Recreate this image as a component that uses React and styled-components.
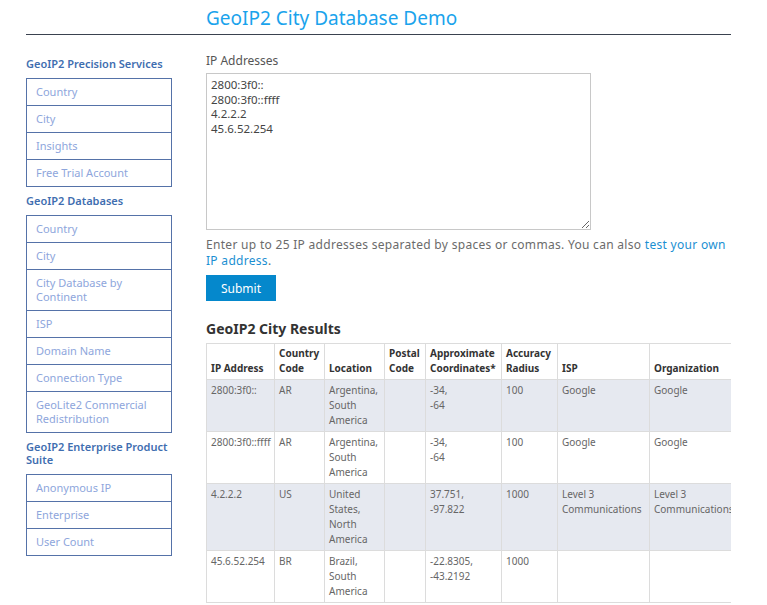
import React from 'react';
import styled, { createGlobalStyle } from 'styled-components';

const GlobalStyle = createGlobalStyle`
  html, body { margin: 0; padding: 0; background: #fff; }
  html { scrollbar-width: none; }
  body {
    font-family: "Noto Sans", "Open Sans", sans-serif;
    color: #555;
  }
`;

const sideGroups = [
  {
    title: 'GeoIP2 Precision Services',
    items: ['Country', 'City', 'Insights', 'Free Trial Account'],
  },
  {
    title: 'GeoIP2 Databases',
    items: [
      'Country',
      'City',
      'City Database by Continent',
      'ISP',
      'Domain Name',
      'Connection Type',
      'GeoLite2 Commercial Redistribution',
    ],
  },
  {
    title: 'GeoIP2 Enterprise Product Suite',
    items: ['Anonymous IP', 'Enterprise', 'User Count'],
  },
];

const columns = [
  { label: 'IP Address', width: 68 },
  { label: 'Country Code', width: 50 },
  { label: 'Location', width: 60 },
  { label: 'Postal Code', width: 41 },
  { label: 'Approximate Coordinates*', width: 76 },
  { label: 'Accuracy Radius', width: 56 },
  { label: 'ISP', width: 92 },
  { label: 'Organization', width: 96 },
  { label: 'Domain', width: 70 },
  { label: 'Metro Code', width: 50 },
];

const rows = [
  ['2800:3f0::', 'AR', 'Argentina, South America', '', '-34,\n-64', '100', 'Google', 'Google', '', ''],
  ['2800:3f0::ffff', 'AR', 'Argentina, South America', '', '-34,\n-64', '100', 'Google', 'Google', '', ''],
  ['4.2.2.2', 'US', 'United States, North America', '', '37.751,\n-97.822', '1000', 'Level 3 Communications', 'Level 3 Communications', '', ''],
  ['45.6.52.254', 'BR', 'Brazil, South America', '', '-22.8305,\n-43.2192', '1000', '', '', '', ''],
];

const App = () => {
  return (
    <Page>
      <GlobalStyle />
      <Header>
        <Title>GeoIP2 City Database Demo</Title>
      </Header>
      <Layout>
        <Sidebar>
          {sideGroups.map((g) => (
            <React.Fragment key={g.title}>
              <SideHeading>{g.title}</SideHeading>
              <SideList>
                {g.items.map((it) => (
                  <SideItem key={it} href="#">{it}</SideItem>
                ))}
              </SideList>
            </React.Fragment>
          ))}
        </Sidebar>
        <Main>
          <Label>IP Addresses</Label>
          <IpInput
            spellCheck
            defaultValue={'2800:3f0::\n2800:3f0::ffff\n4.2.2.2\n45.6.52.254'}
          />
          <Help>
            Enter up to 25 IP addresses separated by spaces or commas. You can also{' '}
            <a href="#">test your own IP address</a>.
          </Help>
          <SubmitButton>Submit</SubmitButton>
          <ResultsTitle>GeoIP2 City Results</ResultsTitle>
          <TableWrap>
            <Table>
              <colgroup>
                {columns.map((c) => (
                  <col key={c.label} style={{ width: c.width }} />
                ))}
              </colgroup>
              <thead>
                <tr>
                  {columns.map((c) => (
                    <Th key={c.label}>{c.label}</Th>
                  ))}
                </tr>
              </thead>
              <tbody>
                {rows.map((r, i) => (
                  <Tr key={i} $shaded={i % 2 === 0}>
                    {r.map((cell, j) => (
                      <Td key={j}>{cell}</Td>
                    ))}
                  </Tr>
                ))}
              </tbody>
            </Table>
          </TableWrap>
        </Main>
      </Layout>
    </Page>
  );
};

export default App;

const Page = styled.div`
  width: 705px;
  padding-left: 26px;
`;

const Header = styled.header`
  border-bottom: 1px solid #3a424f;
  padding: 6px 0 4px 180px;
`;

const Title = styled.h1`
  margin: 0;
  font-size: 19px;
  line-height: 24px;
  font-weight: 400;
  color: #1aa3ec;
`;

const Layout = styled.div`
  display: grid;
  grid-template-columns: 146px 1fr;
  column-gap: 34px;
  padding-top: 18px;
`;

const Sidebar = styled.nav`
  display: flex;
  flex-direction: column;
  padding-top: 4px;
`;

const SideHeading = styled.h3`
  margin: 7px 0 8px;
  font-size: 11px;
  line-height: 13px;
  font-weight: 600;
  color: #3f6eb0;

  &:first-child {
    margin-top: 0;
  }
`;

const SideList = styled.div`
  border: 1px solid #5572a8;
  display: flex;
  flex-direction: column;
`;

const SideItem = styled.a`
  display: block;
  padding: 6px 14px 6px 9px;
  font-size: 11px;
  line-height: 14px;
  color: #8ea6dc;
  text-decoration: none;
  border-bottom: 1px solid #5572a8;

  &:last-child {
    border-bottom: none;
  }
`;

const Main = styled.main`
  display: flex;
  flex-direction: column;
  align-items: flex-start;
  min-width: 0;
`;

const Label = styled.label`
  font-size: 12px;
  line-height: 16px;
  color: #555;
  margin-bottom: 4px;
`;

const IpInput = styled.textarea`
  display: block;
  box-sizing: border-box;
  width: 385px;
  height: 157px;
  margin: 0;
  padding: 4px;
  border: 1px solid #c8c8c8;
  font-family: "Noto Sans", sans-serif;
  font-size: 11.5px;
  line-height: 14.5px;
  color: #444;
  resize: both;
`;

const Help = styled.p`
  margin: 7px 0 6px;
  font-size: 12px;
  line-height: 16px;
  letter-spacing: 0.3px;
  color: #6b6b6b;

  a {
    color: #1b8fd2;
    text-decoration: none;
  }
`;

const SubmitButton = styled.button`
  width: 70px;
  height: 26px;
  border: none;
  background: #0588cc;
  color: #fff;
  font-family: "Noto Sans", sans-serif;
  font-size: 12px;
  padding: 0;
  cursor: pointer;
`;

const ResultsTitle = styled.h2`
  margin: 19px 0 6px;
  font-size: 14px;
  line-height: 17px;
  font-weight: 700;
  color: #333;
`;

const TableWrap = styled.div`
  width: 100%;
  overflow-x: auto;
`;

const Table = styled.table`
  border-collapse: collapse;
  table-layout: fixed;
  width: 659px;
  font-size: 10px;
  line-height: 15px;
`;

const Th = styled.th`
  border: 1px solid #dcdcdc;
  padding: 2px 4px 3px;
  text-align: left;
  vertical-align: bottom;
  font-weight: 700;
  color: #333;
`;

const Tr = styled.tr`
  background: ${(p) => (p.$shaded ? '#e6e9f0' : '#fff')};
`;

const Td = styled.td`
  border: 1px solid #dcdcdc;
  padding: 3px 4px 3px;
  vertical-align: top;
  color: #666;
  white-space: pre-line;
  overflow: hidden;
`;
